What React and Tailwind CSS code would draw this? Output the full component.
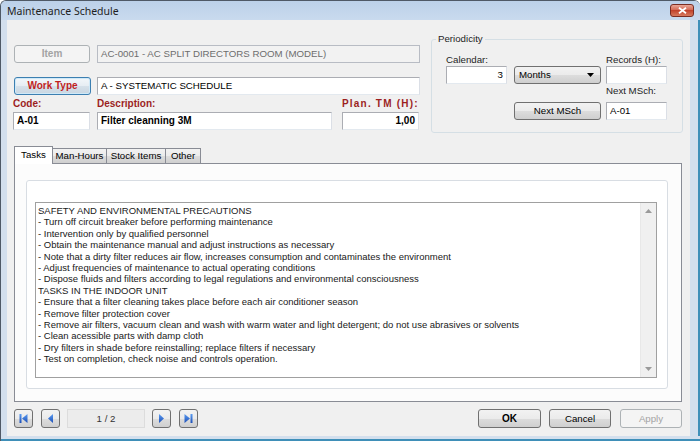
import React from 'react';

const btnBase =
  "flex items-center rounded-[3px] border border-[#707070] bg-[linear-gradient(#f2f2f2,#ebebeb_50%,#dddddd_50%,#cfcfcf)] text-[#000]";
const btn = btnBase + " justify-center";

const lines = [
  "SAFETY AND ENVIRONMENTAL PRECAUTIONS",
  "- Turn off circuit breaker before performing maintenance",
  "- Intervention only by qualified personnel",
  "- Obtain the maintenance manual and adjust instructions as necessary",
  "- Note that a dirty filter reduces air flow, increases consumption and contaminates the environment",
  "- Adjust frequencies of maintenance to actual operating conditions",
  "- Dispose fluids and filters according to legal regulations and environmental consciousness",
  "TASKS IN THE INDOOR UNIT",
  "- Ensure that a filter cleaning takes place before each air conditioner season",
  "- Remove filter protection cover",
  "- Remove air filters, vacuum clean and wash with warm water and light detergent; do not use abrasives or solvents",
  "- Clean acessible parts with damp cloth",
  "- Dry filters in shade before reinstalling; replace filters if necessary",
  "- Test on completion, check noise and controls operation.",
];

const Field = ({ className = "", children }) => (
  <div
    className={
      "flex h-[18px] items-center border border-[#abadb3] border-b-[#e3e9ef] border-r-[#dbdfe6] bg-white px-[3px] " +
      className
    }
  >
    {children}
  </div>
);

const Label = ({ className = "", children }) => (
  <span className={"text-[10px] font-bold text-[#9c1f1f] " + className}>{children}</span>
);

const NavBtn = ({ kind }) => (
  <div className={btn + " h-[19px] w-[19px] border-[#8e8f8f]"}>
    <svg width="11" height="11" viewBox="0 0 11 11">
      <defs>
        <linearGradient id={"g" + kind} x1="0" y1="0" x2="0" y2="1">
          <stop offset="0" stopColor="#5b9cf0" />
          <stop offset="1" stopColor="#1d4fb8" />
        </linearGradient>
      </defs>
      {kind === "first" && (
        <>
          <rect x="1.5" y="1" width="2" height="9" fill={"url(#g" + kind + ")"} />
          <path d="M9.5 1 L4 5.5 L9.5 10 Z" fill={"url(#g" + kind + ")"} />
        </>
      )}
      {kind === "prev" && <path d="M8 1 L3 5.5 L8 10 Z" fill={"url(#g" + kind + ")"} />}
      {kind === "next" && <path d="M3 1 L8 5.5 L3 10 Z" fill={"url(#g" + kind + ")"} />}
      {kind === "last" && (
        <>
          <path d="M1.5 1 L7 5.5 L1.5 10 Z" fill={"url(#g" + kind + ")"} />
          <rect x="7.5" y="1" width="2" height="9" fill={"url(#g" + kind + ")"} />
        </>
      )}
    </svg>
  </div>
);

export default function App() {
  return (
    <div className="flex h-[441px] w-[700px] flex-col overflow-hidden rounded-t-[6px] border-l border-t border-[#4f5966] bg-[#d3dfed] font-['Liberation_Sans',Arial,sans-serif] text-[9.7px] leading-[12px] text-[#000]">
      {/* Title bar */}
      <div className="flex h-[19px] shrink-0 items-center justify-between bg-[linear-gradient(#bcd1e9,#c9daee)] pl-[6px] pr-[6px]">
        <span className="font-['Noto_Sans',sans-serif] text-[10.5px] text-[#1e1e1e]">Maintenance Schedule</span>
        <div className="flex h-[13px] w-[24px] items-center justify-center rounded-[3px] border border-[#7b2d22] bg-[linear-gradient(#e9a696,#d2634d_50%,#c2432c_50%,#d77a5e)]">
          <svg width="9" height="7" viewBox="0 0 9 7">
            <path d="M1 0.8 L8 6.2 M8 0.8 L1 6.2" stroke="#fff" strokeWidth="1.8" />
          </svg>
        </div>
      </div>

      <div className="flex min-h-0 flex-1">
        <div className="w-[6px] shrink-0" />
        {/* Client area */}
        <div className="flex h-[416px] w-[683px] shrink-0 flex-col bg-[#f0f0f0]">
          {/* Top section */}
          <div className="flex h-[126px] shrink-0">
            <div className="ml-[7px] w-[406px] pt-[25px]">
              <div className="flex h-[18px]">
                <div className="flex h-[18px] w-[76px] items-center justify-center rounded-[3px] border border-[#adb2b5] bg-[#f4f4f4] text-[10px] font-bold text-[#a3a3a3]">
                  Item
                </div>
                <div className="ml-[7px] flex h-[18px] w-[323px] items-center border border-[#b8bcc4] bg-[#f2f2f2] px-[3px] text-[#6d6d6d]">
                  AC-0001 - AC SPLIT DIRECTORS ROOM (MODEL)
                </div>
              </div>
              <div className="mt-[14px] flex h-[18px]">
                <div className="flex h-[18px] w-[77px] items-center justify-center rounded-[3px] border border-[#3c7fb1] bg-[linear-gradient(#f3f7fa,#e6edf3_50%,#d6e1ea_50%,#c9d6e1)] text-[10px] font-bold text-[#c01f1f] shadow-[inset_0_0_0_1px_#cfe9f8]">
                  Work Type
                </div>
                <Field className="ml-[6px] w-[323px]">A - SYSTEMATIC SCHEDULE</Field>
              </div>
              <div className="mt-[1px] flex h-[16px] items-center -ml-[1px]">
                <Label className="w-[84px]">Code:</Label>
                <Label className="w-[245px]">Description:</Label>
                <Label className="tracking-[1.2px]">Plan. TM (H):</Label>
              </div>
              <div className="flex h-[18px] -ml-[1px] text-[10px] font-bold">
                <Field className="w-[77px]">A-01</Field>
                <Field className="ml-[7px] w-[235px]">Filter cleanning 3M</Field>
                <Field className="ml-[10px] w-[77px] justify-end">1,00</Field>
              </div>
            </div>

            {/* Periodicity group */}
            <div className="ml-[11px] mt-[13px] flex w-[252px] flex-col">
              <div className="relative z-10 -mb-[6px] flex h-[12px] items-center">
                <span className="ml-[5px] bg-[#f0f0f0] px-[2px] text-[#1e1e1e]">Periodicity</span>
              </div>
              <div className="h-[94px] rounded-[3px] border border-[#d5dfe5] pl-[14px] pt-[14px]">
                <div className="flex h-[12px] items-center text-[#1e1e1e]">
                  <span className="w-[61px]">Calendar:</span>
                  <span className="ml-[99px]">Records (H):</span>
                </div>
                <div className="flex h-[18px]">
                  <Field className="w-[61px] justify-end">3</Field>
                  <div className={btnBase + " ml-[7px] h-[18px] w-[87px] justify-between pl-[4px] pr-[6px]"}>
                    <span>Months</span>
                    <svg width="7" height="4" viewBox="0 0 7 4">
                      <path d="M0 0 L7 0 L3.5 4 Z" fill="#000" />
                    </svg>
                  </div>
                  <Field className="ml-[5px] w-[61px]" />
                </div>
                <div className="flex h-[13px] items-end text-[#1e1e1e]">
                  <span className="ml-[160px]">Next MSch:</span>
                </div>
                <div className="mt-[5px] flex h-[18px]">
                  <div className={btn + " ml-[68px] h-[18px] w-[87px]"}>Next MSch</div>
                  <Field className="ml-[5px] w-[61px]">A-01</Field>
                </div>
              </div>
            </div>
          </div>

          {/* Tabs */}
          <div className="ml-[7px] flex h-[17px] shrink-0 items-end">
            <div className="relative z-10 -mb-[1px] flex h-[18px] w-[39px] items-start justify-center border border-b-0 border-[#898c95] bg-white pt-[2px]">
              Tasks
            </div>
            <div className="flex h-[15px] w-[54px] items-center justify-center border border-l-0 border-b-0 border-[#898c95] bg-[linear-gradient(#f2f2f2,#ebebeb_50%,#dddddd_50%,#cfcfcf)]">
              Man-Hours
            </div>
            <div className="flex h-[15px] w-[59px] items-center justify-center border border-l-0 border-b-0 border-[#898c95] bg-[linear-gradient(#f2f2f2,#ebebeb_50%,#dddddd_50%,#cfcfcf)]">
              Stock Items
            </div>
            <div className="flex h-[15px] w-[35px] items-center justify-center border border-l-0 border-b-0 border-[#898c95] bg-[linear-gradient(#f2f2f2,#ebebeb_50%,#dddddd_50%,#cfcfcf)]">
              Other
            </div>
          </div>
          <div className="ml-[7px] h-[239px] w-[668px] shrink-0 border border-[#898c95] bg-[#fcfcfc] pl-[11px] pt-[16px]">
            <div className="h-[209px] w-[642px] rounded-[3px] border border-[#d8dde3] bg-white pl-[8px] pt-[21px]">
              <div className="flex h-[176px] w-[622px] border border-[#a0a0a0] bg-white">
                <div className="flex-1 whitespace-nowrap pl-[2px] pt-[2px] text-[9.5px] leading-[11.4px] text-[#202020]">
                  {lines.map((l) => (
                    <div key={l}>{l}</div>
                  ))}
                </div>
                <div className="flex w-[16px] flex-col items-center justify-between border-l border-[#e8e8e8] bg-[#f0f0f0] py-[6px]">
                  <svg width="7" height="4" viewBox="0 0 7 4">
                    <path d="M0 4 L7 4 L3.5 0 Z" fill="#9a9a9a" />
                  </svg>
                  <svg width="7" height="4" viewBox="0 0 7 4">
                    <path d="M0 0 L7 0 L3.5 4 Z" fill="#9a9a9a" />
                  </svg>
                </div>
              </div>
            </div>
          </div>

          {/* Bottom bar */}
          <div className="ml-[7px] mr-[8px] mt-[7px] flex h-[19px] shrink-0">
            <NavBtn kind="first" />
            <div className="ml-[8px]">
              <NavBtn kind="prev" />
            </div>
            <div className="ml-[7px] flex h-[19px] w-[78px] items-center justify-center border border-[#dcdcdc] bg-[#ececec] text-[#333]">
              1 / 2
            </div>
            <div className="ml-[7px]">
              <NavBtn kind="next" />
            </div>
            <div className="ml-[8px]">
              <NavBtn kind="last" />
            </div>
            <div className={btn + " ml-auto h-[19px] w-[63px] text-[10px] font-bold"}>OK</div>
            <div className={btn + " ml-[8px] h-[19px] w-[62px]"}>Cancel</div>
            <div className="ml-[9px] flex h-[19px] w-[62px] items-center justify-center rounded-[3px] border border-[#adb2b5] bg-[#f4f4f4] text-[#a3a3a3]">
              Apply
            </div>
          </div>
        </div>
        <div className="flex-1 border-r-[2px] border-[#3f8fb8] bg-[#d3dfed]" />
      </div>
      <div className="h-[5px] shrink-0 border-b-[2px] border-[#3f8fb8] bg-[#d3dfed]" />
    </div>
  );
}
